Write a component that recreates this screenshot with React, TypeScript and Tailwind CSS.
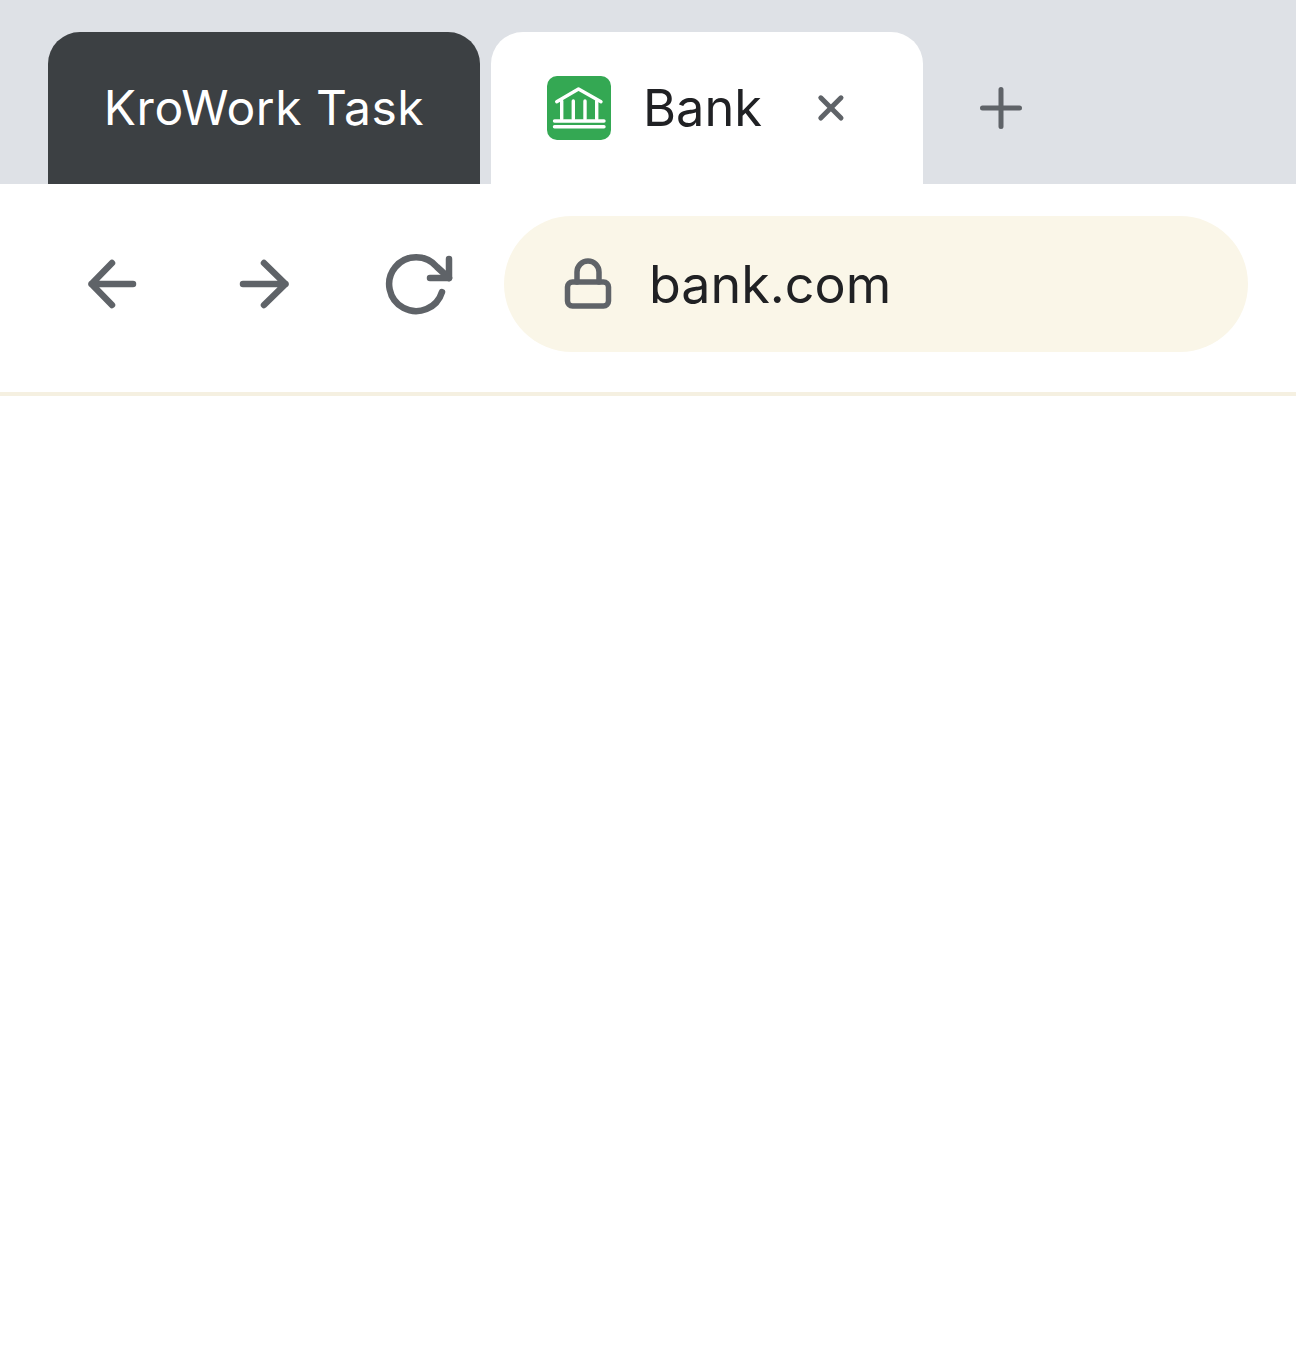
export default function App() {
  return (
    <div className="min-h-[1356px] bg-white font-['Inter',sans-serif]">
      <div className="flex h-[184px] items-end gap-[11px] bg-[#dee1e6] pl-12">
        <div className="flex h-[152px] w-[432px] items-center justify-center rounded-t-[32px] bg-[#3c4043] text-[48px] tracking-[0.5px] text-white">
          KroWork Task
        </div>
        <div className="flex h-[152px] w-[432px] items-center rounded-t-[32px] bg-white pl-14 text-[50.5px] text-[#202124]">
          <svg width="64" height="64" viewBox="0 0 64 64" fill="none" className="shrink-0">
            <rect width="64" height="64" rx="10" fill="#34a853" />
            <g stroke="#fff" strokeWidth="3.4" strokeLinecap="round" strokeLinejoin="round">
              <path d="M9.7 25.7 31.5 13 54 25.7" />
              <path d="M14.7 25v18M26.3 25v18M38 25v18M49.7 25v18" />
              <path d="M7.5 45H57M7.5 50.7H57" />
            </g>
          </svg>
          <span className="ml-8 w-[120px]">Bank</span>
          <svg width="32" height="32" viewBox="0 0 32 32" fill="none" className="ml-[52px] shrink-0" stroke="#5f6368" strokeWidth="5" strokeLinecap="round">
            <path d="M5.8 5.8 26 26M26 5.8 5.8 26" />
          </svg>
        </div>
        <div className="flex h-[152px] items-center pl-[35px]">
          <svg width="64" height="64" viewBox="0 0 64 64" fill="none" stroke="#5f6368" strokeWidth="5" strokeLinecap="round">
            <path d="M13.5 32H50.5M32 13.5V50.5" />
          </svg>
        </div>
      </div>
      <div className="flex h-[212px] gap-6 border-b-4 border-[#f5f0e1] pl-12 pt-8">
        <div className="flex h-[136px] w-32 items-center justify-center">
          <svg width="64" height="64" viewBox="0 0 64 64" fill="none" stroke="#5f6368" strokeWidth="6.5" strokeLinecap="round" strokeLinejoin="round">
            <path d="M53 32H11.5M32 11 11.5 32 32 53" />
          </svg>
        </div>
        <div className="flex h-[136px] w-32 items-center justify-center">
          <svg width="64" height="64" viewBox="0 0 64 64" fill="none" stroke="#5f6368" strokeWidth="6.5" strokeLinecap="round" strokeLinejoin="round">
            <path d="M11 32H53.5M32 11 53.5 32 32 53" />
          </svg>
        </div>
        <div className="flex h-[136px] w-32 items-center justify-center">
          <svg width="64" height="64" viewBox="0 0 64 64" fill="none" stroke="#5f6368" strokeWidth="6.5" strokeLinecap="round" strokeLinejoin="round" className="overflow-visible">
            <path d="M58 40A27 27 0 1 1 53 15L65 26" />
            <path d="M65 7V26H46" />
          </svg>
        </div>
        <div className="flex h-[136px] w-[744px] items-center rounded-full bg-[#faf6e8] pl-[52px] text-[52px] text-[#202124]">
          <svg width="64" height="64" viewBox="0 0 64 64" fill="none" stroke="#5f6368" strokeWidth="5.5" strokeLinecap="round" strokeLinejoin="round" className="shrink-0">
            <rect x="11.5" y="30" width="41" height="24" rx="5" />
            <path d="M21 30V20a11 11 0 0 1 22 0V30" />
          </svg>
          <span className="ml-[29px] pt-[2px]">bank.com</span>
        </div>
      </div>
    </div>
  );
}
